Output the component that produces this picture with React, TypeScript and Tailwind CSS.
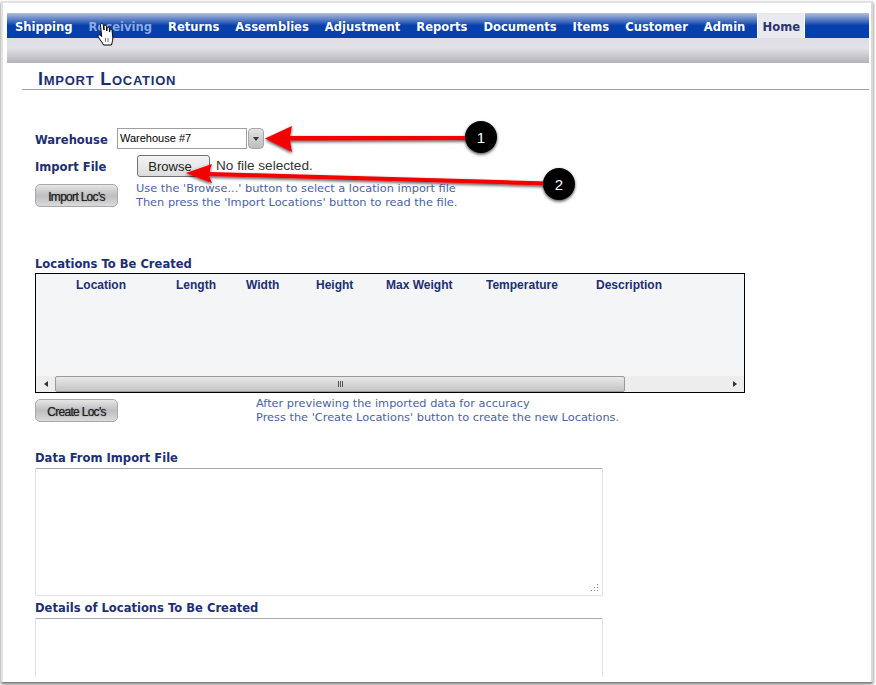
const NAV = ["Shipping", "Receiving", "Returns", "Assemblies", "Adjustment", "Reports", "Documents", "Items", "Customer", "Admin"];

const COLS = [
  { name: "Location", w: "w-[100px]" },
  { name: "Length", w: "w-[70px]" },
  { name: "Width", w: "w-[70px]" },
  { name: "Height", w: "w-[70px]" },
  { name: "Max Weight", w: "w-[100px]" },
  { name: "Temperature", w: "w-[110px]" },
  { name: "Description", w: "w-[100px]" },
];

const VERDANA = "font-['DejaVu_Sans',sans-serif]";

function SectionLabel({ children, className = "" }: { children: React.ReactNode; className?: string }) {
  return <div className={`${VERDANA} text-[11.55px] leading-[14px] font-bold text-[#1c2f73] whitespace-nowrap ${className}`}>{children}</div>;
}

function GreyButton({ label }: { label: string }) {
  return (
    <button className="w-[83px] h-[23px] shrink-0 rounded-[5px] border border-[#a9a9a9] bg-gradient-to-b from-[#e6e6e6] via-[#bebec3] to-[#dadada] pt-[2px] font-['Liberation_Sans',sans-serif] text-[12px] tracking-[-0.7px] text-[#222] [text-shadow:0_0_1px_#555]">
      {label}
    </button>
  );
}

function Help({ lines, className = "" }: { lines: string[]; className?: string }) {
  return (
    <div className={`${VERDANA} text-[11.35px] leading-[14px] text-[#4a62a8] ${className}`}>
      {lines.map(l => <div key={l} className="whitespace-nowrap">{l}</div>)}
    </div>
  );
}

function Annotations() {
  return (
    <svg className="absolute left-0 top-0 pointer-events-none" width="876" height="685">
      <defs>
        <filter id="sh" x="-30%" y="-30%" width="160%" height="160%">
          <feDropShadow dx="0" dy="1.5" stdDeviation="1.5" floodColor="#000" floodOpacity="0.7" />
        </filter>
      </defs>
      <g filter="url(#sh)">
        <path d="M265 138.5 L292 126 L290 136 L470 136 L470 140 L290 140.5 L292 152 Z" fill="#f40000" />
        <circle cx="481" cy="137" r="16" fill="#000" />
      </g>
      <g filter="url(#sh)">
        <path d="M186 173 L212 164 L209 172 L548 181.5 L548 185.5 L209 176 L212 183 Z" fill="#f40000" />
        <circle cx="559" cy="184" r="16" fill="#000" />
      </g>
      <text x="481" y="142.5" textAnchor="middle" fill="#fff" fontSize="15" fontFamily="Liberation Sans, sans-serif">1</text>
      <text x="559" y="189.5" textAnchor="middle" fill="#fff" fontSize="15" fontFamily="Liberation Sans, sans-serif">2</text>
      {/* hand cursor */}
      <path
        d="M100.5 25 C100.5 22.8 103 22.8 103.2 25 L104 30 L104 26.5 C104.2 24.8 106.4 24.8 106.5 26.5 L106.8 31 L107 28 C107.3 26.5 109.2 26.7 109.3 28.2 L109.5 32 L109.9 30 C110.3 28.7 112 29 112 30.4 L112.8 37 C113 39.5 112.3 41.5 111.5 45 L103.5 45 C102.5 42.5 100 40 98.2 36.8 C97.4 35.2 99 34 100.2 35.2 L101.6 36.5 Z"
        fill="#fff"
        stroke="#000"
        strokeWidth="1"
        strokeLinejoin="round"
      />
      <path d="M105.5 38 L105.5 42 M108 38 L108 42" stroke="#555" strokeWidth="0.8" />
    </svg>
  );
}

export default function App() {
  return (
    <div className="relative w-[876px] h-[685px] overflow-hidden bg-white">
      <div className="ml-[1px] mt-[1px] w-[872px] h-[681px] overflow-hidden border-2 border-b-0 border-[#e2e2e2] border-r-[#d8d8d8] bg-white shadow-[0_2px_3px_rgba(0,0,0,0.6)]">
        {/* nav */}
        <div className="ml-[4px] mt-[10px] w-[862px]">
          <div className="flex h-[25px] bg-gradient-to-b from-[#b4bfdc] via-[#0540ac] via-50% to-[#0540ac]">
            <div className="flex items-center gap-4 pl-2 pr-3 pt-[4px]">
              {NAV.map(n => (
                <span key={n} className={`${VERDANA} text-[11.57px] font-bold whitespace-nowrap ${n === "Receiving" ? "text-[#8fa9e0]" : "text-white"}`}>
                  {n}
                </span>
              ))}
            </div>
            <div className={`${VERDANA} w-[48px] flex items-center justify-center pt-[4px] bg-[#e9e9f0] border-l border-r border-white text-[11.57px] font-bold text-[#2a3570]`}>
              Home
            </div>
          </div>
          <div className="h-[25px] bg-gradient-to-b from-[#dedde3] via-[#e3e2e8] via-40% to-[#b3b3b9]" />
        </div>

        {/* heading */}
        <div className="ml-[19px] mr-[2px] mt-[5px] h-[22px] border-b border-[#a2a2a2] pl-4 font-['Liberation_Sans',sans-serif] text-[18px] leading-[22px] tracking-[0.75px] font-bold [font-variant:small-caps] text-[#1c2f73]">
          Import Location
        </div>

        {/* form */}
        <div className="ml-[32px] mt-[38px]">
          <div className="flex items-center h-[21px]">
            <SectionLabel className="w-[82px] pt-[2px]">Warehouse</SectionLabel>
            <div className="w-[130px] h-[21px] border border-[#a0a0a0] bg-white pl-[2px] font-['Liberation_Sans',sans-serif] text-[11px] leading-[19px] text-black">
              Warehouse #7
            </div>
            <div className="ml-[1px] w-[16px] h-[21px] rounded-[4px] border border-[#a8a8a8] bg-gradient-to-b from-[#e4e4e4] to-[#bdbdc2] flex items-center justify-center">
              <div className="w-0 h-0 border-l-[3.5px] border-r-[3.5px] border-t-[4px] border-l-transparent border-r-transparent border-t-[#333]" />
            </div>
          </div>
          <div className="flex items-center h-[22px] mt-[6px]">
            <SectionLabel className="w-[102px] pt-[2px]">Import File</SectionLabel>
            <button className="w-[73px] h-[22px] rounded-[3px] border border-[#707070] bg-gradient-to-b from-[#f4f4f4] to-[#dcdcdc] pt-[1px] pr-[7px] font-['Liberation_Sans',sans-serif] text-[13px] text-[#222]">
              Browse
            </button>
            <span className="ml-[6px] pt-[1px] font-['Liberation_Sans',sans-serif] text-[13.6px] text-[#333]">No file selected.</span>
          </div>
          <div className="flex mt-[7px]">
            <GreyButton label="Import Loc's" />
            <Help className="ml-[18px] -mt-[3px]" lines={["Use the 'Browse...' button to select a location import file", "Then press the 'Import Locations' button to read the file."]} />
          </div>

          <SectionLabel className="mt-[48px]">Locations To Be Created</SectionLabel>
          <div className="mt-[2px] w-[710px] h-[120px] border border-black bg-[#f4f5f7] flex flex-col justify-between">
            <div className="flex pl-[40px] pt-[4px]">
              {COLS.map(c => (
                <div key={c.name} className={`${c.w} font-['Liberation_Sans',sans-serif] text-[12px] leading-[14px] font-bold text-[#1c2f73] whitespace-nowrap`}>
                  {c.name}
                </div>
              ))}
            </div>
            <div className="flex h-[16px] bg-[#ededed]">
              <div className="w-[19px] flex items-center justify-center">
                <div className="w-0 h-0 border-t-[3px] border-b-[3px] border-r-[4px] border-t-transparent border-b-transparent border-r-[#333]" />
              </div>
              <div className="w-[570px] rounded-[2px] border border-[#9a9a9a] bg-gradient-to-b from-[#e8e8e8] to-[#c4c4c4] flex items-center justify-center">
                <div className="flex gap-[1px]">
                  <div className="w-[1px] h-[6px] bg-[#555]" />
                  <div className="w-[1px] h-[6px] bg-[#555]" />
                  <div className="w-[1px] h-[6px] bg-[#555]" />
                </div>
              </div>
              <div className="flex-1 flex items-center justify-end pr-[7px]">
                <div className="w-0 h-0 border-t-[3px] border-b-[3px] border-l-[4px] border-t-transparent border-b-transparent border-l-[#333]" />
              </div>
            </div>
          </div>
          <div className="flex mt-[6px]">
            <GreyButton label="Create Loc's" />
            <Help className="ml-[138px] -mt-[3px]" lines={["After previewing the imported data for accuracy", "Press the 'Create Locations' button to create the new Locations."]} />
          </div>

          <SectionLabel className="mt-[27px]">Data From Import File</SectionLabel>
          <div className="relative mt-[3px] w-[568px] h-[128px] rounded-[2px] border border-[#e0e1e8] border-t-[#a8a8b0] bg-white">
            <svg className="absolute right-[4px] bottom-[4px]" width="8" height="8" viewBox="0 0 8 8">
              <path d="M7 1h1v1H7zM4 4h1v1H4zM7 4h1v1H7zM1 7h1v1H1zM4 7h1v1H4zM7 7h1v1H7z" fill="#888" />
            </svg>
          </div>
          <SectionLabel className="mt-[5px]">Details of Locations To Be Created</SectionLabel>
          <div className="mt-[3px] w-[568px] h-[59px] rounded-t-[2px] border border-b-0 border-[#e0e1e8] border-t-[#a8a8b0] bg-white" />
        </div>
      </div>
      <Annotations />
    </div>
  );
}
